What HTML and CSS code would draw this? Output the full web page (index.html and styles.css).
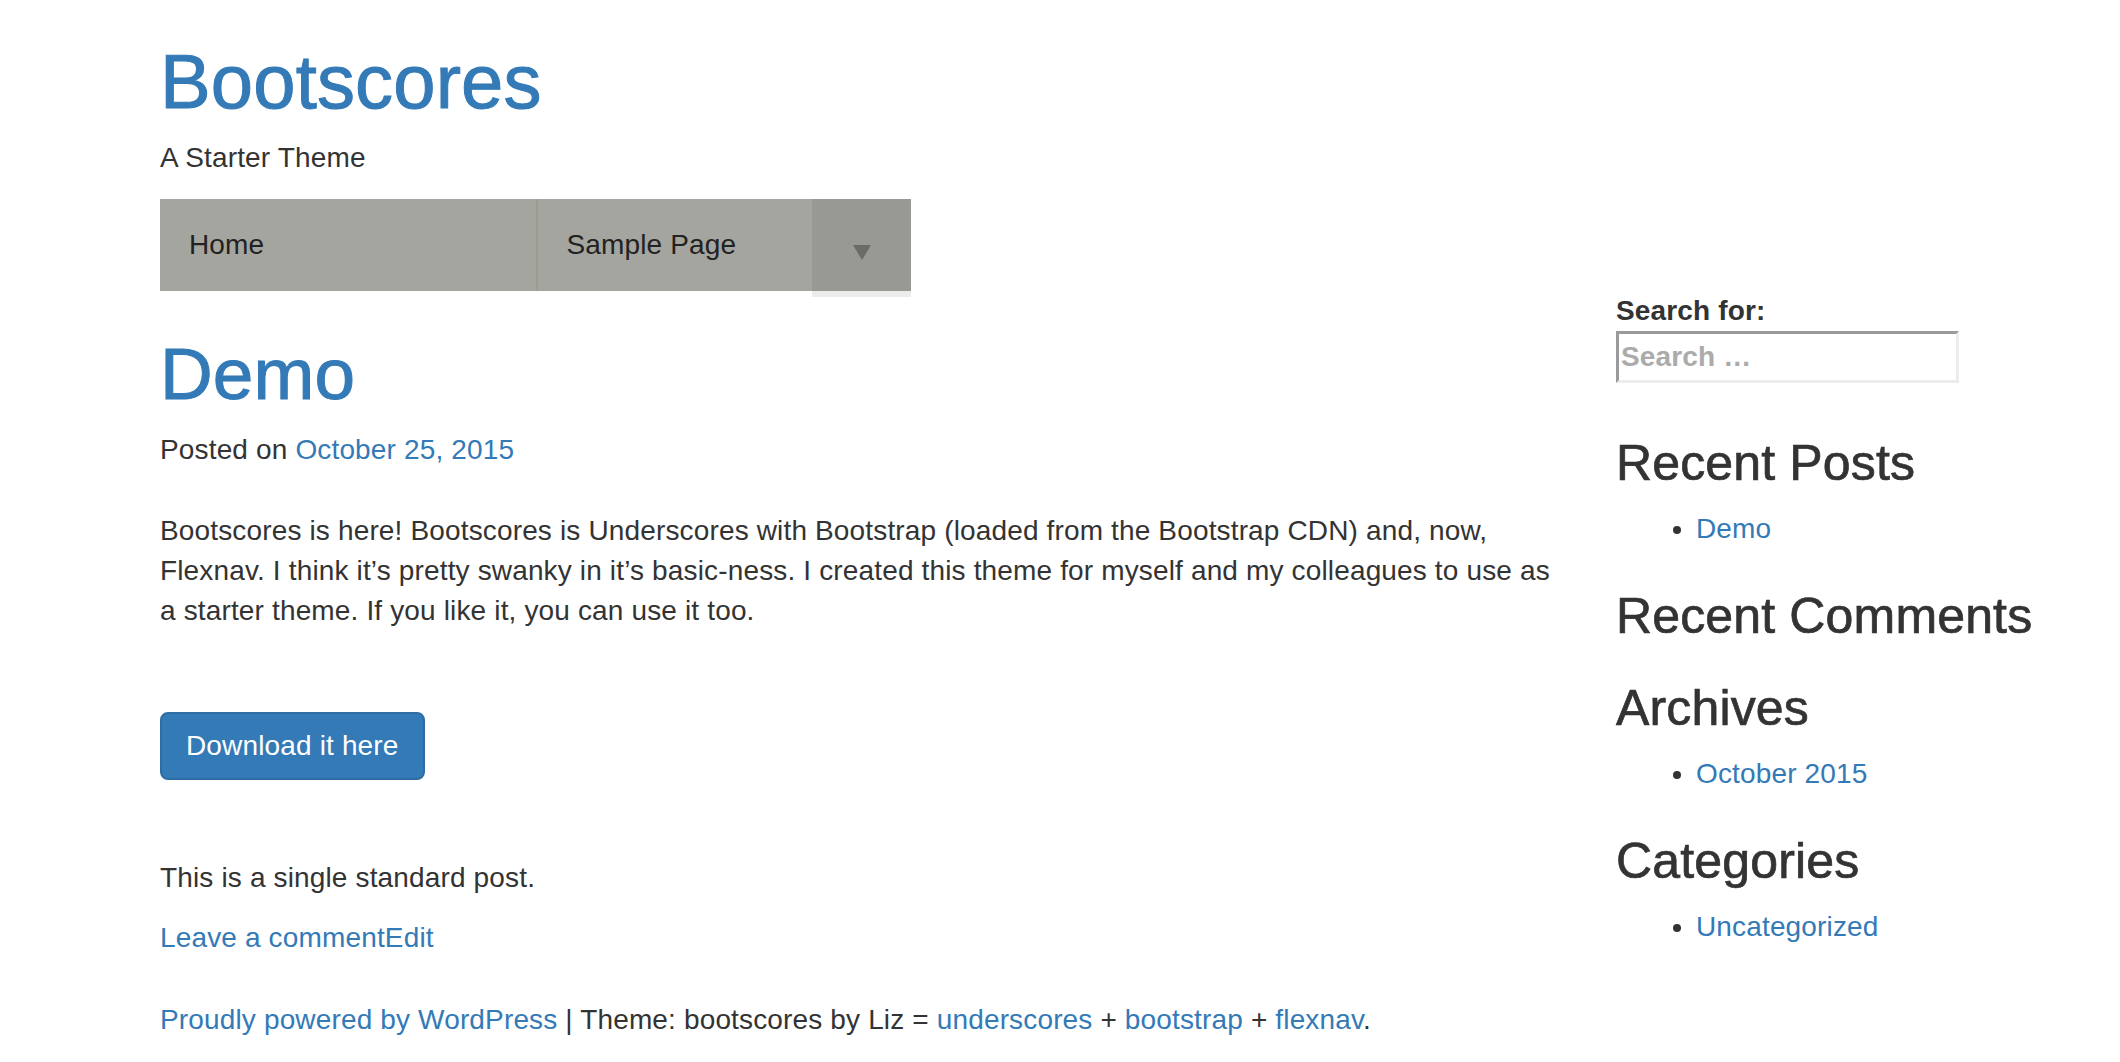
FILE: index.html
```html
<!DOCTYPE html>
<html lang="en">
<head>
<meta charset="utf-8">
<title>Demo – Bootscores</title>
<link rel="stylesheet" href="styles.css">
</head>
<body>
<div class="page">
  <header class="site-header">
    <h1 class="site-title"><a href="#">Bootscores</a></h1>
    <p class="site-description">A Starter Theme</p>
    <nav class="main-nav">
      <ul class="flexnav">
        <li class="nav-item"><a href="#">Home</a></li>
        <li class="nav-item has-sub"><a href="#">Sample Page</a>
          <span class="touch-button"><svg class="caret" width="18" height="15" viewBox="0 0 18 15"><path d="M0 0H18L9 15Z" fill="#6b6b68"/></svg></span>
        </li>
      </ul>
    </nav>
  </header>

  <div class="layout">
    <main class="content">
      <article class="post">
        <h1 class="entry-title">Demo</h1>
        <div class="entry-meta">Posted on <a href="#">October 25, 2015</a></div>
        <div class="entry-content">
          <p class="intro">Bootscores is here! Bootscores is Underscores with Bootstrap (loaded from the Bootstrap CDN) and, now, Flexnav. I think it’s pretty swanky in it’s basic-ness. I created this theme for myself and my colleagues to use as a starter theme. If you like it, you can use it too.</p>
          <p class="btn-wrap"><a class="btn" href="#">Download it here</a></p>
          <p class="note">This is a single standard post.</p>
        </div>
        <footer class="entry-footer"><a href="#">Leave a comment</a><a href="#">Edit</a></footer>
      </article>
      <footer class="site-footer">
        <a href="#">Proudly powered by WordPress</a> | Theme: bootscores by Liz = <a href="#">underscores</a> + <a href="#">bootstrap</a> + <a href="#">flexnav</a>.
      </footer>
    </main>

    <aside class="sidebar">
      <section class="widget widget-search">
        <label class="search-label">Search for:
          <input class="search-field" type="search" placeholder="Search …">
        </label>
      </section>
      <section class="widget">
        <h2 class="widget-title">Recent Posts</h2>
        <ul><li><a href="#">Demo</a></li></ul>
      </section>
      <section class="widget widget-empty">
        <h2 class="widget-title">Recent Comments</h2>
      </section>
      <section class="widget">
        <h2 class="widget-title">Archives</h2>
        <ul><li><a href="#">October 2015</a></li></ul>
      </section>
      <section class="widget">
        <h2 class="widget-title">Categories</h2>
        <ul><li><a href="#">Uncategorized</a></li></ul>
      </section>
    </aside>
  </div>
</div>
</body>
</html>
```

FILE: styles.css
```css
* { box-sizing: border-box; }

html, body {
  margin: 0;
  background: #ffffff;
}

body {
  font-family: "Liberation Sans", Arial, sans-serif;
  font-size: 28px;
  line-height: 40px;
  letter-spacing: 0.15px;
  color: #333333;
}

a {
  color: #337ab7;
  text-decoration: none;
}

.page {
  padding: 40px 0 0 160px;
}

/* header */
.site-title {
  margin: 0;
  font-size: 76px;
  line-height: 84px;
  font-weight: normal;
  -webkit-text-stroke: 1px currentColor;
}

.site-description {
  margin: 14px 0 0;
}

.main-nav {
  margin-top: 21px;
  width: 751px;
}

.flexnav {
  display: flex;
  margin: 0;
  padding: 0;
  list-style: none;
  height: 92px;
  background: #a5a5a0;
}

.nav-item {
  position: relative;
  flex: 1 1 50%;
}

.nav-item + .nav-item {
  border-left: 2px solid #9c9d92;
}

.nav-item a {
  display: block;
  padding-left: 29px;
  line-height: 92px;
  color: #222222;
}

.touch-button {
  position: absolute;
  top: 0;
  right: 0;
  width: 99px;
  height: 92px;
  background: #999993;
  box-shadow: 0 6px 0 #ececec;
  display: flex;
  justify-content: center;
  align-items: flex-start;
  padding-top: 46px;
}

.caret { display: block; }

/* layout */
.layout {
  display: grid;
  grid-template-columns: 1410px 470px;
  column-gap: 46px;
  align-items: start;
}

.entry-title {
  margin: 43px 0 0;
  font-size: 73px;
  line-height: 80px;
  font-weight: normal;
  color: #337ab7;
  -webkit-text-stroke: 1px currentColor;
}

.entry-meta {
  margin-top: 16px;
}

.entry-content p {
  margin: 0;
}

.entry-content .intro {
  margin-top: 41px;
}

.entry-content .btn-wrap {
  margin-top: 81px;
}

.btn {
  display: inline-block;
  padding: 12px 24px;
  border: 2px solid #2e6da4;
  border-radius: 8px;
  background: #337ab7;
  color: #ffffff;
  line-height: 40px;
}

.entry-content .note {
  margin-top: 78px;
}

.entry-footer {
  margin-top: 20px;
}

.site-footer {
  margin-top: 42px;
}

/* sidebar */
.sidebar {
  display: flex;
  flex-direction: column;
}

.widget {
  margin-bottom: 40px;
}

.widget-empty {
  margin-bottom: 19px;
}

.widget-search {
  margin-bottom: 53px;
}

.search-label {
  display: block;
  font-weight: bold;
}

.search-field {
  display: block;
  width: 343px;
  height: 52px;
  margin: 0;
  padding: 0 2px;
  font: inherit;
  font-weight: bold;
  letter-spacing: inherit;
  color: #333333;
  background: #ffffff;
  border-style: solid;
  border-width: 3px;
  border-color: #9a9a9a #ececec #ececec #9a9a9a;
  outline: none;
}

.search-field::placeholder {
  color: #ababab;
}

.widget-title {
  margin: 0 0 18px;
  font-size: 50px;
  line-height: 55px;
  font-weight: normal;
  color: #333333;
  -webkit-text-stroke: 0.7px currentColor;
}

.widget ul {
  margin: 0;
  padding-left: 80px;
}
```
